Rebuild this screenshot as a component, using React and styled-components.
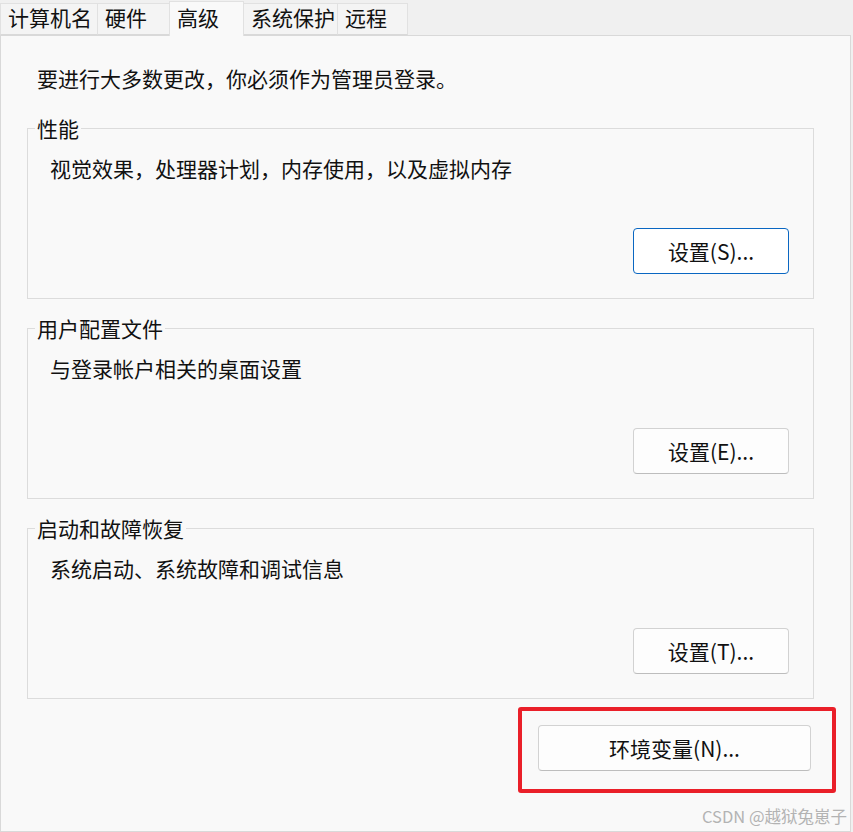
import styled, { createGlobalStyle } from "styled-components";

const GlobalStyle = createGlobalStyle`
  body {
    margin: 0;
    background: #f0f0f0;
    font-family: "Noto Sans CJK SC", "Noto Sans", sans-serif;
    color: #111;
  }
`;

const Window = styled.div`
  position: relative;
  width: 851px;
  height: 832px;
`;

const TabStrip = styled.div`
  display: flex;
  align-items: flex-end;
  height: 35px;
`;

const Tab = styled.div`
  box-sizing: border-box;
  width: ${(p) => p.w}px;
  height: ${(p) => (p.active ? 35 : 32)}px;
  margin-left: -1px;
  margin-bottom: ${(p) => (p.active ? "-1px" : "0")};
  padding-left: 7px;
  border: 1px solid #e1e1e1;
  border-bottom: ${(p) => (p.active ? "none" : "1px solid #d9d9d9")};
  background: ${(p) => (p.active ? "#f9f9f9" : "#f4f4f4")};
  font-size: 21px;
  line-height: ${(p) => (p.active ? 30 : 27)}px;
  white-space: nowrap;
  position: relative;
  z-index: ${(p) => (p.active ? 1 : 0)};
  &:first-child { margin-left: 0; }
`;

const Panel = styled.div`
  box-sizing: border-box;
  height: 797px;
  border: 1px solid #d9d9d9;
  background: #f9f9f9;
  padding: 28px 0 0 26px;
`;

const Intro = styled.div`
  padding-left: 10px;
  font-size: 21px;
  line-height: 28px;
`;

const Group = styled.fieldset`
  box-sizing: border-box;
  width: 787px;
  margin: ${(p) => (p.first ? "23px" : "16px")} 0 0 0;
  padding: 0 24px 24px 7px;
  border: 1px solid #dcdcdc;
  min-width: 0;
`;

const Legend = styled.legend`
  padding: 0 2px;
  font-size: 21px;
  line-height: 26px;
`;

const Desc = styled.div`
  margin: 13px 0 0 15px;
  font-size: 21px;
  line-height: 28px;
`;

const ButtonRow = styled.div`
  display: flex;
  justify-content: flex-end;
  margin-top: 46px;
`;

const Button = styled.button`
  box-sizing: border-box;
  width: ${(p) => p.w || 156}px;
  height: 46px;
  padding: 0;
  border: 1px solid ${(p) => (p.primary ? "#0a67c2" : "#d2d2d2")};
  border-bottom-color: ${(p) => (p.primary ? "#0a67c2" : "#bdbdbd")};
  border-radius: 4px;
  background: ${(p) => (p.primary ? "#ffffff" : "#fdfdfd")};
  font-family: inherit;
  font-size: 21px;
  line-height: 26px;
  color: #111;
`;

const EnvRow = styled.div`
  display: flex;
  justify-content: flex-end;
  margin: 8px 14px 0 0;
`;

const Highlight = styled.div`
  border: 4px solid #ea1f29;
  border-radius: 3px;
  padding: 14px 21px 18px 16px;
`;

const Watermark = styled.div`
  position: absolute;
  right: 4px;
  bottom: 4px;
  font-size: 16.5px;
  color: #b3b3b3;
  font-family: "Noto Sans CJK SC", "Liberation Sans", sans-serif;
`;

const tabs = [
  { label: "计算机名", w: 98 },
  { label: "硬件", w: 73 },
  { label: "高级", w: 75, active: true },
  { label: "系统保护", w: 95 },
  { label: "远程", w: 71 },
];

const groups = [
  { title: "性能", desc: "视觉效果，处理器计划，内存使用，以及虚拟内存", btn: "设置(S)...", primary: true },
  { title: "用户配置文件", desc: "与登录帐户相关的桌面设置", btn: "设置(E)..." },
  { title: "启动和故障恢复", desc: "系统启动、系统故障和调试信息", btn: "设置(T)..." },
];

export default function App() {
  return (
    <Window>
      <GlobalStyle />
      <TabStrip>
        {tabs.map((t) => (
          <Tab key={t.label} w={t.w} active={t.active}>{t.label}</Tab>
        ))}
      </TabStrip>
      <Panel>
        <Intro>要进行大多数更改，你必须作为管理员登录。</Intro>
        {groups.map((g, i) => (
          <Group key={g.title} first={i === 0}>
            <Legend>{g.title}</Legend>
            <Desc>{g.desc}</Desc>
            <ButtonRow>
              <Button primary={g.primary}>{g.btn}</Button>
            </ButtonRow>
          </Group>
        ))}
        <EnvRow>
          <Highlight>
            <Button w={273}>环境变量(N)...</Button>
          </Highlight>
        </EnvRow>
      </Panel>
      <Watermark>CSDN @越狱兔崽子</Watermark>
    </Window>
  );
}
